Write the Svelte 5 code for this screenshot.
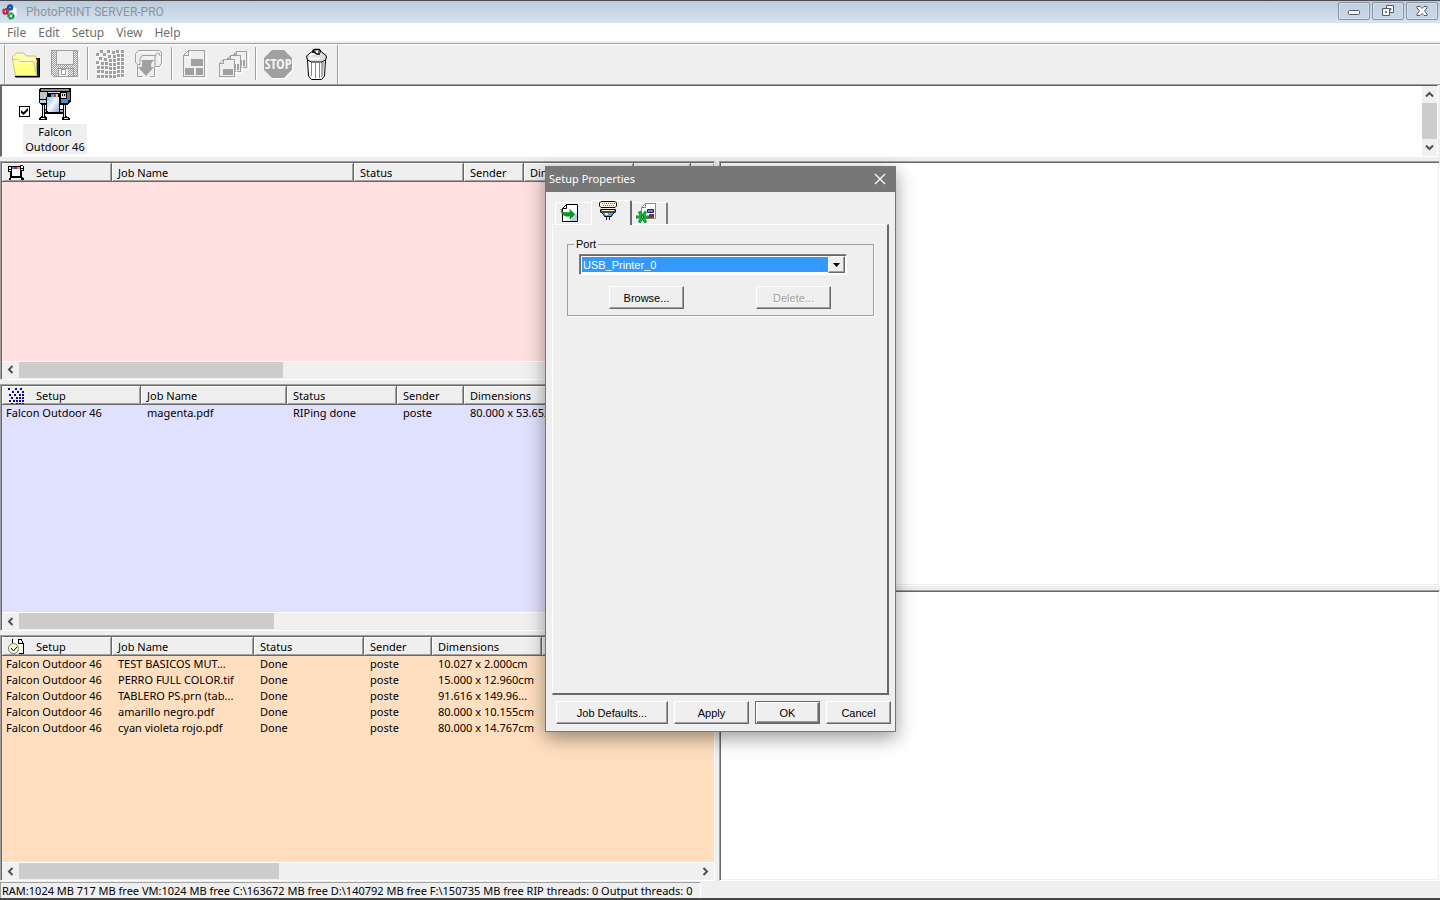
<script>
    const menus = ["File", "Edit", "Setup", "View", "Help"]

    const queues = [
        {
            id: "output",
            color: "#ffdfe0",
            thumb: 39,
            columns: [
                ["Setup", 110], ["Job Name", 242], ["Status", 110],
                ["Sender", 60], ["Dimensions", 110], ["Pages", 57], ["", 24]
            ],
            jobs: []
        },
        {
            id: "rip",
            color: "#e0e0ff",
            thumb: 37.6,
            columns: [
                ["Setup", 139], ["Job Name", 146], ["Status", 110],
                ["Sender", 67], ["Dimensions", 110], ["Pages", 57], ["", 84]
            ],
            jobs: [
                ["Falcon Outdoor 46", "magenta.pdf", "RIPing done", "poste", "80.000 x 53.652cm", "", ""]
            ]
        },
        {
            id: "hold",
            color: "#ffdfc0",
            thumb: 38.4,
            columns: [
                ["Setup", 110], ["Job Name", 142], ["Status", 110],
                ["Sender", 68], ["Dimensions", 110], ["Pages", 57], ["", 116]
            ],
            jobs: [
                ["Falcon Outdoor 46", "TEST BASICOS MUT...", "Done", "poste", "10.027 x 2.000cm", "", ""],
                ["Falcon Outdoor 46", "PERRO FULL COLOR.tif", "Done", "poste", "15.000 x 12.960cm", "", ""],
                ["Falcon Outdoor 46", "TABLERO PS.prn (tab...", "Done", "poste", "91.616 x 149.96...", "", ""],
                ["Falcon Outdoor 46", "amarillo negro.pdf", "Done", "poste", "80.000 x 10.155cm", "", ""],
                ["Falcon Outdoor 46", "cyan violeta rojo.pdf", "Done", "poste", "80.000 x 14.767cm", "", ""]
            ]
        }
    ]

    // halftone dots of the RIP button
    const dots = [
        [6, 2], [13, 2], [18, 3], [22, 2], [27, 2],
        [2, 5], [9, 5], [14, 7], [19, 7], [23, 6], [27, 6],
        [5, 9], [10, 10], [15, 11], [19, 11], [23, 10], [27, 10],
        [2, 13], [7, 14], [11, 14], [15, 15], [19, 15], [23, 14], [27, 14],
        [3, 18], [7, 18], [11, 18], [15, 19], [19, 19], [23, 18], [27, 18],
        [3, 22], [7, 22], [11, 23], [15, 23], [19, 23], [23, 22], [27, 22],
        [3, 27], [7, 27], [11, 27], [15, 27], [19, 27], [23, 26], [27, 26]
    ]
    const smallDots = [
        [0, 0], [7, 0], [12, 0], [4, 3], [9, 3], [14, 3], [1, 6], [6, 6], [11, 6],
        [14, 6], [3, 9], [8, 9], [11, 9], [14, 9], [1, 12], [5, 12], [8, 12], [11, 12],
        [14, 12], [3, 15], [8, 15], [11, 15], [14, 15]
    ]

    let enabled = true
    let port = "USB_Printer_0"
    let open = true

    const close = () => {
        open = false
    }
</script>

<div class="app">
    <header class="titlebar">
        <svg class="logo" width="16" height="16" viewBox="0 0 16 16">
            <path d="M8 3h5l2 2v9H7z" fill="#fff" stroke="#d4d4dc" />
            <circle cx="8" cy="3.500" r="2" fill="none" stroke="#1c4f9c" stroke-width="2.400" />
            <circle cx="3.500" cy="7.500" r="2.200" fill="none" stroke="#b41e3a" stroke-width="2.600" stroke-dasharray="2.600 .4" />
            <circle cx="9" cy="12" r="2.400" fill="none" stroke="#169a45" stroke-width="2.600" stroke-dasharray="2.600 .4" />
        </svg>
        <span class="caption">PhotoPRINT SERVER-PRO</span>
        <div class="window-buttons">
            <button aria-label="Minimize">
                <svg width="14" height="12" viewBox="0 0 14 12"><rect x="1.500" y="5.500" width="11" height="4" rx="1" fill="#fff" stroke="#555b66" /></svg>
            </button>
            <button aria-label="Restore">
                <svg width="14" height="12" viewBox="0 0 14 12">
                    <path d="M5.500.5h7v7h-7z" fill="#fff" stroke="#555b66" />
                    <path d="M8 3.500h2v1.500H8z" fill="none" stroke="#555b66" />
                    <path d="M1.500 3.500h7v7h-7z" fill="#fff" stroke="#555b66" />
                    <path d="M4.500 6.500h1v1h-1z" stroke="#555b66" fill="none" />
                </svg>
            </button>
            <button aria-label="Close">
                <svg width="14" height="12" viewBox="0 0 14 12"><path d="M2 1.500h3l2 2 2-2h3v1.500L9.500 6l2.500 3v1.500H9l-2-2-2 2H2V9l2.500-3L2 3z" fill="#fff" stroke="#555b66" /></svg>
            </button>
        </div>
    </header>

    <nav class="menu">
        {#each menus as item}
            <button>{item}</button>
        {/each}
    </nav>

    <div class="toolbar">
        <div class="tools">
            <button aria-label="Open">
                <svg width="32" height="32" viewBox="0 0 32 32">
                    <path d="M5 29h24V10h1v19l-1 .5H6z" fill="#000" />
                    <path d="M2.500 13V9l3-3 1-1h7l3 3h9l1 2v3" fill="#ffffb0" stroke="#c4bc70" />
                    <path d="M26 10h3v18h-2z" fill="#222" />
                    <path d="M26 12l1-1v12z" fill="#e8e070" />
                    <path d="M2.500 11.500h5l2 2h14l3 14H5.500z" fill="#ffff80" stroke="#d0c880" />
                    <path d="M4 13h3l2 2h13" stroke="#fff" fill="none" />
                    <path d="M5 28.500h24" stroke="#000" />
                </svg>
            </button>
            <button aria-label="Save">
                <svg width="32" height="32" viewBox="0 0 32 32" shape-rendering="crispEdges">
                    <defs>
                        <pattern id="dither" width="2" height="2" patternUnits="userSpaceOnUse">
                            <rect width="2" height="2" fill="#efefef" />
                            <rect width="1" height="1" fill="#a0a0a0" />
                            <rect x="1" y="1" width="1" height="1" fill="#a0a0a0" />
                        </pattern>
                    </defs>
                    <path d="M3 30h27V3" fill="none" stroke="#fff" />
                    <path d="M2.500 2.500h26v26h-24l-2-2z" fill="url(#dither)" stroke="#a0a0a0" />
                    <path d="M7.500 2.500h17v14h-17z" fill="#efefef" stroke="#a0a0a0" />
                    <path d="M9.500 20.500h15v8h-15z" fill="#efefef" stroke="#a0a0a0" />
                    <path d="M12.500 21.500h4v5h-4z" fill="#fff" stroke="#a0a0a0" />
                    <path d="M19 21h5v7h-5z" fill="url(#dither)" />
                </svg>
            </button>
            <span class="divider"></span>
            <button aria-label="RIP">
                <svg width="32" height="32" viewBox="0 0 32 32" shape-rendering="crispEdges">
                    {#each dots as [x, y]}
                        <rect x={x + 1} y={y + 1} width="3" height="3" fill="#fff" />
                        <rect {x} {y} width="3" height="3" fill="#a0a0a0" />
                    {/each}
                </svg>
            </button>
            <button aria-label="Output">
                <svg width="32" height="32" viewBox="0 0 32 32">
                    <path d="M7 4h20M26 6v9M29.500 6v11l-3 3h-5M5 30h18v-7" fill="none" stroke="#fff" />
                    <path d="M5.500 2.500h21l2 2V15l-2 3.500h-4.500V8.500l2-3.500h2l1 3" fill="none" stroke="#a0a0a0" />
                    <path d="M5.500 2.500l-3 3v9l2 2h2.500V10.500l2-3h14M4.500 17v11.500h5M17 28.500h4.500V19" fill="none" stroke="#a0a0a0" />
                    <path d="M8 12h14c-3 1-4 3-4 6v1h3l-8 9-8-9h4v-1c0-3 1-5-1-6z" fill="#a0a0a0" />
                </svg>
            </button>
            <span class="divider"></span>
            <button aria-label="Layout">
                <svg width="32" height="32" viewBox="0 0 32 32" shape-rendering="crispEdges">
                    <path d="M28 3v27H6M7 9h5V3" fill="none" stroke="#fff" />
                    <path d="M10.500 2.500h16v26h-21v-21l5-5v5h-5" fill="none" stroke="#a0a0a0" />
                    <path d="M13 11h12v7H13zM7 20h9v7H7zM18 20h7v7h-7z" fill="#a0a0a0" />
                </svg>
            </button>
            <button aria-label="Nested jobs">
                <svg width="32" height="32" viewBox="0 0 32 32" shape-rendering="crispEdges">
                    <path d="M19.500 3.500h10v16h-13v-13l3-3v3h-3" fill="#efefef" stroke="#a0a0a0" />
                    <path d="M23 12h5v6h-5z" fill="#a0a0a0" />
                    <path d="M13.500 7.500h10v16h-13v-13l3-3v3h-3" fill="#efefef" stroke="#a0a0a0" />
                    <path d="M15 16h7v6h-7z" fill="#a0a0a0" />
                    <path d="M6.500 11.500h11v17h-15v-13l4-4v4h-4" fill="#efefef" stroke="#a0a0a0" />
                    <path d="M6 21h10v6H6z" fill="#a0a0a0" />
                    <path d="M3 30h16V12M25 9v16h-5M31 5v16h-6" fill="none" stroke="#fff" />
                </svg>
            </button>
            <span class="divider"></span>
            <button aria-label="Stop">
                <svg width="32" height="32" viewBox="0 0 32 32">
                    <path d="M11 3h12l8 8v12l-8 8H11l-8-8V11z" fill="#fff" />
                    <path d="M10 2h12l8 8v12l-8 8H10l-8-8V10z" fill="#a0a0a0" />
                    <text class="stop" x="16" y="21" text-anchor="middle">STOP</text>
                </svg>
            </button>
            <button aria-label="Delete">
                <svg width="32" height="32" viewBox="0 0 32 32">
                    <path d="M6.500 12l1 16 3 3.500h10l3-3.500 1-16z" fill="#fff" stroke="#000" />
                    <path d="M10.500 14v14M14.500 15v15M18.500 15v15" stroke="#888" />
                    <path d="M20 14h3l-1 14-2 2z" fill="#aaa" />
                    <path d="M5.500 9l1-2 4-3h10l4 3 1 2-1 3-4 2h-10l-4-2z" fill="#ddd" stroke="#000" />
                    <path d="M8 8l4-2.500h5M8 10.500h11" stroke="#fff" stroke-width="2" fill="none" />
                    <path d="M12 5V2.500l2-1h4l2 2M13 4l3 2h3" stroke="#000" stroke-width="1.500" fill="none" />
                    <path d="M15 3h2v2h-2z" fill="#fff" />
                </svg>
            </button>
        </div>
    </div>

    <section class="devices">
        <div class="device">
            <input type="checkbox" id="falcon" bind:checked={enabled} />
            <label for="falcon">
                <svg width="32" height="32" viewBox="0 0 32 32" shape-rendering="crispEdges">
                    <defs>
                        <linearGradient id="paper" x1="0" y1="0" x2="1" y2="1">
                            <stop offset="0" stop-color="#9db8e8" />
                            <stop offset=".5" stop-color="#f4f8ff" />
                            <stop offset="1" stop-color="#8aa4dc" />
                        </linearGradient>
                    </defs>
                    <path d="M1 0h31v13l-3 4H2l-2-2V2z" fill="#000" />
                    <path d="M2 1h28v2H2z" fill="#8c8c8c" />
                    <path d="M1 4h7v7H1z" fill="#c4c4c4" />
                    <path d="M28 4h3v8h-3z" fill="#777" />
                    <path d="M9 4h12v1H9zM22 5h5v5h-5z" fill="#ddd" />
                    <path d="M23 6h1v2h-1zM25 6h1v2h-1z" fill="#000" />
                    <path d="M12 6h3v3h-3z" fill="#00c8f0" />
                    <path d="M15 6h2v3h-2z" fill="#e010c0" />
                    <path d="M17 6h2v3h-2z" fill="#ffe000" />
                    <path d="M1 12h6v3H1z" fill="#b4d4f4" />
                    <path d="M22 11h7v4h-7z" fill="#4a90d0" />
                    <path d="M3 16h3v12l2 2v2H0v-2l3-2zM24 16h3v12l4 2v2h-8v-2l1-2z" fill="#000" />
                    <path d="M4 17h1v12H4zM25 17h1v12h-1zM2 30h4v1H2zM25 30h4v1h-4z" fill="#e8e8e8" />
                    <path d="M6 21h18v5H6z" fill="#000" />
                    <path d="M6 22h18v2H6z" fill="#aaa" />
                    <path d="M7 9h14v15l-2 1H9l-2-1z" fill="#000" />
                    <path d="M8 9h12v14l-1 1H9l-1-1z" fill="url(#paper)" />
                </svg>
                <span>Falcon<br />Outdoor 46</span>
            </label>
        </div>
        <div class="vscroll">
            <button aria-label="Scroll up">
                <svg width="9" height="7" viewBox="0 0 9 7"><path d="M1 5.500l3.500-3.500L8 5.500" fill="none" stroke="#505050" stroke-width="2" /></svg>
            </button>
            <div class="thumb"></div>
            <button aria-label="Scroll down">
                <svg width="9" height="7" viewBox="0 0 9 7"><path d="M1 1.500L4.500 5 8 1.500" fill="none" stroke="#505050" stroke-width="2" /></svg>
            </button>
        </div>
    </section>

    <main>
        <div class="queues">
            {#each queues as q}
                <section class="pane queue">
                    <div class="list" style="background: {q.color}">
                        <table>
                            <colgroup>
                                {#each q.columns as [, width]}
                                    <col style="width: {width}px" />
                                {/each}
                            </colgroup>
                            <thead>
                                <tr>
                                    {#each q.columns as [name], i}
                                        <th>
                                            {#if i == 0}
                                                <div class="first">
                                                    <svg width="16" height="16" viewBox="0 0 16 16" shape-rendering="crispEdges">
                                                        {#if q.id == "output"}
                                                            <path d="M0 1h12V0h3v1h1v5h-2v6l2 2v1h-3v-2H3v2H1v-2l1-1V7H0z" fill="#000" />
                                                            <path d="M4 4h8v7H4zM1 2h2v2H1zM1 5h2v1H1zM13 1h2v2h-2zM13 4h2v1h-2z" fill="#fff" />
                                                            <path d="M4 2h2v2H4z" fill="#0af" />
                                                            <path d="M6 2h3v2H6z" fill="#d0c" />
                                                            <path d="M9 2h3v2H9z" fill="#da0" />
                                                        {:else if q.id == "rip"}
                                                            {#each smallDots as [x, y]}
                                                                <rect {x} {y} width="2" height="2" fill="#0a0aa0" />
                                                            {/each}
                                                        {:else}
                                                            <path d="M5 1h6v4h4v9H5z" fill="#fff" />
                                                            <path d="M4.500 0v4M10.500 0v4h5v10h-5M11 .5h2l2 3" fill="none" stroke="#000" />
                                                            <circle cx="5.500" cy="9.500" r="5" fill="#fffff0" stroke="#777733" shape-rendering="auto" />
                                                            <path d="M3 9l2.500 3L9 8" fill="none" stroke="#000" shape-rendering="auto" />
                                                        {/if}
                                                    </svg>
                                                    {name}
                                                </div>
                                            {:else}
                                                {name}
                                            {/if}
                                        </th>
                                    {/each}
                                </tr>
                            </thead>
                            <tbody>
                                {#each q.jobs as job}
                                    <tr>
                                        {#each job as cell}
                                            <td>{cell}</td>
                                        {/each}
                                    </tr>
                                {/each}
                            </tbody>
                        </table>
                    </div>
                    <div class="hscroll">
                        <button aria-label="Scroll left">
                            <svg width="7" height="9" viewBox="0 0 7 9"><path d="M5.500 1L2 4.500 5.500 8" fill="none" stroke="#505050" stroke-width="2" /></svg>
                        </button>
                        <div class="track"><div class="thumb" style="width: {q.thumb}%"></div></div>
                        <button aria-label="Scroll right">
                            <svg width="7" height="9" viewBox="0 0 7 9"><path d="M1.500 1L5 4.500 1.500 8" fill="none" stroke="#505050" stroke-width="2" /></svg>
                        </button>
                    </div>
                </section>
            {/each}
        </div>
        <div class="previews">
            <section class="pane"></section>
            <section class="pane"></section>
        </div>
    </main>

    <footer>
        <span>RAM:1024 MB 717 MB free VM:1024 MB free C:\163672 MB free D:\140792 MB free F:\150735 MB free RIP threads: 0 Output threads: 0</span>
    </footer>
</div>

{#if open}
    <div class="dialog" role="dialog" aria-labelledby="dialog-title">
        <div class="dialog-title">
            <span id="dialog-title">Setup Properties</span>
            <button aria-label="Close" on:click={close}>
                <svg width="12" height="12" viewBox="0 0 12 12"><path d="M1 1l10 10M11 1L1 11" stroke="#fff" stroke-width="1.200" /></svg>
            </button>
        </div>
        <div class="tabs" role="tablist">
            <button class="tab" role="tab" aria-selected="false" aria-label="General">
                <svg width="20" height="20" viewBox="0 0 20 20">
                    <path d="M6.500 1.500h11v17h-15v-13z" fill="#fff" stroke="#000" />
                    <path d="M17 10v8H9z" fill="#b8ccf0" />
                    <path d="M6.500 1.500v4h-4" fill="none" stroke="#000" />
                    <path d="M1 6c0 3 3 4 9 3.500V6.500l5 5-5 4.500v-3C5 14 1 12 1 6z" fill="#0a9a20" stroke="#066a14" stroke-width=".5" />
                </svg>
            </button>
            <button class="tab active" role="tab" aria-selected="true" aria-label="Port">
                <svg width="20" height="20" viewBox="0 0 20 20">
                    <path d="M3 .5h14l1.500 1.500v3L17 6.500H3L1.500 5V2z" fill="#fff8dc" stroke="#000" />
                    <path d="M4 2.500h13M5 4.500h11" stroke="#776" stroke-dasharray="1 1" />
                    <path d="M2.500 8.500h15v2l-3 3-1 2h-7l-1-2-3-3z" fill="#7090d8" stroke="#000" />
                    <path d="M4 9.500h12" stroke="#fff3a0" />
                    <path d="M2 11h16" stroke="#000" />
                    <path d="M7 13h3" stroke="#dfe8ff" stroke-width="2" />
                    <path d="M8.500 15v4M11.500 15v4" stroke="#113" />
                </svg>
            </button>
            <button class="tab" role="tab" aria-selected="false" aria-label="Advanced">
                <svg width="20" height="20" viewBox="0 0 20 20">
                    <path d="M9.500.5h10v15h-14v-11z" fill="#fff" stroke="#888" />
                    <path d="M9.500.5v4h-4" fill="none" stroke="#888" />
                    <path d="M11.500 6.500h6v3h-6z" fill="#7078e0" stroke="#202080" />
                    <path d="M13 11h5v4h-5z" fill="#803040" />
                    <path d="M13 14H0M9.800 8.400L3.200 19.600M3.200 8.400l6.600 11.200" stroke="#0a7a28" stroke-width="3" />
                    <path d="M12.500 14H.5M9.500 8.900l-6 10.200M3.500 8.900l6 10.200" stroke="#10b840" stroke-width="1.600" />
                    <circle cx="6.500" cy="14" r="3.500" fill="#10b840" />
                    <circle cx="6.500" cy="14" r="1.300" fill="#bbb" stroke="#042" />
                </svg>
            </button>
        </div>
        <div class="sheet">
            <fieldset>
                <legend><label for="port">Port</label></legend>
                <div class="combo">
                    <select id="port" bind:value={port}>
                        <option>USB_Printer_0</option>
                    </select>
                    <span class="drop">
                        <svg width="7" height="4" viewBox="0 0 7 4"><path d="M0 0h7L3.500 4z" fill="#000" /></svg>
                    </span>
                </div>
                <div class="port-buttons">
                    <button class="push">Browse...</button>
                    <button class="push" disabled>Delete...</button>
                </div>
            </fieldset>
        </div>
        <div class="actions">
            <button class="push wide">Job Defaults...</button>
            <button class="push">Apply</button>
            <button class="push small default" on:click={close}>OK</button>
            <button class="push small" on:click={close}>Cancel</button>
        </div>
    </div>
{/if}

<style>
    :global(body) {
        margin: 0;
        background: #efefef;
    }
    .app {
        position: relative;
        display: flex;
        flex-direction: column;
        box-sizing: border-box;
        min-height: 100vh;
        border-top: 1px solid #4a4a50;
        border-bottom: 2px solid #484848;
        background: #efefef;
        color: #000;
        font: 11px/16px "Noto Sans", "Open Sans", sans-serif;
        overflow: hidden;
    }
    button {
        padding: 0;
        border: 0;
        background: none;
        color: inherit;
        font: inherit;
    }
    svg {
        display: block;
    }

    /* title bar and menu */
    .titlebar {
        display: flex;
        align-items: center;
        height: 22px;
        padding: 0 2px;
        background: linear-gradient(#bccbda, #d7e4f2);
    }
    .caption {
        flex: 1;
        padding-left: 8px;
        color: #8d949c;
        font-family: Roboto, "Noto Sans", sans-serif;
        font-size: 12px;
    }
    .window-buttons {
        display: flex;
        gap: 2px;
        margin-bottom: 2px;
    }
    .window-buttons button {
        display: flex;
        align-items: center;
        justify-content: center;
        width: 32px;
        height: 18px;
        border: 1px solid #8593a6;
        border-radius: 2px;
        background: linear-gradient(#c3d0df, #c9d7e6);
        box-shadow: inset 0 0 0 1px #d5e0ec;
        box-sizing: border-box;
    }
    .menu {
        display: flex;
        gap: 12px;
        height: 17px;
        padding: 1px 7px 0;
        background: #fff;
        color: #6d6d6d;
        border-bottom: 2px solid #efefef;
    }
    .menu button {
        font-size: 12px;
    }

    /* toolbar */
    .toolbar {
        display: flex;
        height: 39px;
        padding: 1px 0 0 4px;
        border-top: 1px solid #a0a0a0;
        border-bottom: 1px solid #a0a0a0;
        box-shadow: inset 0 1px #fff;
    }
    .tools {
        display: flex;
        padding-left: 2px;
        border-left: 1px solid #a0a0a0;
        border-right: 1px solid #a0a0a0;
        box-shadow: inset 1px 0 #fff, 1px 0 #fff;
    }
    .tools button {
        width: 39px;
        padding: 2px 4px 4px 3px;
    }
    .divider {
        width: 1px;
        margin: 2px 3px 4px 2px;
        background: #a0a0a0;
        box-shadow: 1px 0 #fff;
    }
    .stop {
        fill: #f4f4f4;
        font: bold 14px "Open Sans Condensed", "Liberation Sans", sans-serif;
    }

    /* devices */
    .devices {
        display: flex;
        justify-content: space-between;
        height: 70px;
        margin-right: 2px;
        border: 1px solid #fff;
        border-top-color: #606060;
        border-left: 2px solid #696969;
        background: #fff;
    }
    .device {
        display: flex;
        padding: 2px 0 0 17px;
    }
    .device input {
        appearance: none;
        width: 11px;
        height: 11px;
        margin: 18px 0 0;
        border: 1px solid #000;
        box-sizing: border-box;
        background: #fff;
    }
    .device input:checked::before {
        content: "";
        display: block;
        width: 7px;
        height: 7px;
        margin: 1px;
        background: #000;
        clip-path: polygon(0 30%, 35% 62%, 100% 0, 100% 38%, 35% 100%, 0 68%);
    }
    .device label {
        display: flex;
        flex-direction: column;
        align-items: center;
        width: 64px;
        margin-left: -7px;
        text-align: center;
        line-height: 15px;
    }
    .device label svg {
        margin-bottom: 4px;
    }
    .device label span {
        width: 64px;
        background: #efefef;
        white-space: nowrap;
    }
    .vscroll {
        display: flex;
        flex-direction: column;
        width: 15px;
        background: #f0f0f0;
    }
    .vscroll button {
        display: flex;
        align-items: center;
        justify-content: center;
        height: 17px;
    }
    .vscroll .thumb {
        flex: 1;
    }
    .thumb {
        background: #cdcdcd;
    }

    /* panes */
    main {
        flex: 1;
        display: grid;
        grid-template-columns: minmax(0, 715fr) minmax(0, 721fr);
        gap: 4px;
        margin-top: 4px;
    }
    .queues, .previews {
        display: grid;
        gap: 4px;
    }
    .queues {
        grid-template-rows: 218fr 247fr 245fr;
    }
    .previews {
        grid-template-rows: 425fr 291fr;
    }
    .pane {
        border-top: 1px solid #a0a0a0;
        border-left: 1px solid #a0a0a0;
        border-right: 1px solid #fff;
        border-bottom: 1px solid #fff;
        background: #fff;
        box-shadow: inset 1px 1px #696969, inset -1px -1px #efefef;
    }
    .queue {
        display: flex;
        flex-direction: column;
        padding: 1px 0 1px 1px;
        min-width: 0;
    }
    .list {
        flex: 1;
        overflow: hidden;
    }
    table {
        width: 0;
        min-width: 100%;
        table-layout: fixed;
        border-collapse: separate;
        border-spacing: 0;
    }
    th, td {
        height: 16px;
        padding: 0 0 0 6px;
        font-weight: normal;
        line-height: 16px;
        text-align: left;
        white-space: nowrap;
        overflow: hidden;
    }
    th {
        padding-top: 2px;
        border-right: 1px solid #696969;
        border-bottom: 1px solid #696969;
        background: #efefef;
        box-shadow: inset 1px 1px #fff, inset -1px -1px #a0a0a0;
    }
    td:first-child {
        padding-left: 4px;
    }
    .first {
        display: flex;
        gap: 12px;
    }
    .hscroll {
        display: flex;
        height: 17px;
        border-top: 1px solid #fff;
        box-sizing: border-box;
        background: #f0f0f0;
    }
    .hscroll button {
        display: flex;
        align-items: center;
        justify-content: center;
        width: 17px;
    }
    .track {
        flex: 1;
        display: flex;
    }

    footer {
        display: flex;
        height: 16px;
        margin-top: 1px;
    }
    footer span {
        min-width: 696px;
        padding: 0 2px 0 1px;
        border: 1px solid #a0a0a0;
        border-right-color: #fff;
        border-bottom: 0;
        line-height: 16px;
        white-space: nowrap;
    }

    /* setup dialog */
    .dialog {
        position: absolute;
        left: 545px;
        top: 166px;
        width: 351px;
        box-sizing: border-box;
        border: 1px solid #777;
        background: #efefef;
        box-shadow: 0 6px 18px rgba(0, 0, 0, .4);
        font: 11px/14px "Liberation Sans", Arial, sans-serif;
    }
    .dialog-title {
        display: flex;
        align-items: center;
        justify-content: space-between;
        height: 23px;
        padding: 0 9px 2px 3px;
        background: #777;
        color: #fff;
        font: 11px/16px "Noto Sans", "Open Sans", sans-serif;
    }
    .tabs {
        display: flex;
        align-items: flex-end;
        height: 24px;
        margin-top: 8px;
        padding-left: 9px;
    }
    .tab {
        width: 36px;
        height: 22px;
        padding: 0 0 1px 4px;
        border-top: 1px solid #fff;
        border-left: 1px solid #fff;
        border-radius: 2px 2px 0 0;
    }
    .tab:last-child {
        border-left: 0;
        border-right: 2px solid #808080;
    }
    .tab.active {
        position: relative;
        width: 41px;
        height: 25px;
        margin-bottom: -1px;
        padding-bottom: 4px;
        padding-left: 6px;
        border-right: 2px solid #696969;
        background: #efefef;
    }
    .sheet {
        height: 471px;
        margin: 0 6px;
        box-sizing: border-box;
        padding: 12px 13px 12px 14px;
        border: 1px solid #fff;
        border-right: 2px solid #696969;
        border-bottom: 2px solid #696969;
    }
    fieldset {
        margin: 0;
        padding: 3px 26px 6px 11px;
        border: 1px solid #a0a0a0;
        box-shadow: 1px 1px #fff;
    }
    legend {
        margin-left: -5px;
        padding: 0 2px;
    }
    .combo {
        display: grid;
        grid-template-columns: 1fr 17px;
        padding: 1px;
        border: 1px solid #808080;
        border-right-color: #fff;
        border-bottom-color: #fff;
        box-shadow: inset 1px 1px #696969;
        background: #fff;
    }
    .combo select {
        grid-area: 1 / 1 / 2 / 3;
        appearance: none;
        height: 17px;
        margin: 0;
        padding: 0 18px 0 1px;
        border: 1px solid #fff;
        border-radius: 0;
        background: #3399ff;
        color: #fff;
        font: inherit;
        outline: none;
    }
    .drop {
        grid-area: 1 / 2 / 2 / 3;
        display: flex;
        align-items: center;
        justify-content: center;
        border: 1px solid #fff;
        border-right-color: #696969;
        border-bottom-color: #696969;
        background: #efefef;
        box-shadow: inset -1px -1px #a0a0a0;
        pointer-events: none;
    }
    .port-buttons {
        display: flex;
        justify-content: space-between;
        padding: 11px 16px 0 30px;
    }
    .push {
        width: 75px;
        height: 23px;
        border: 1px solid #fff;
        border-right-color: #696969;
        border-bottom-color: #696969;
        background: #efefef;
        box-shadow: inset -1px -1px #a0a0a0;
    }
    .push:disabled {
        color: #a0a0a0;
        text-shadow: 1px 1px #fff;
    }
    .actions {
        display: flex;
        justify-content: flex-end;
        gap: 6px;
        padding: 6px 4px 7px;
    }
    .wide {
        width: 112px;
    }
    .small {
        width: 65px;
    }
    .default {
        border-color: #696969;
        box-shadow: inset 1px 1px #fff, inset -1px -1px #696969, inset -2px -2px #a0a0a0;
    }
</style>
